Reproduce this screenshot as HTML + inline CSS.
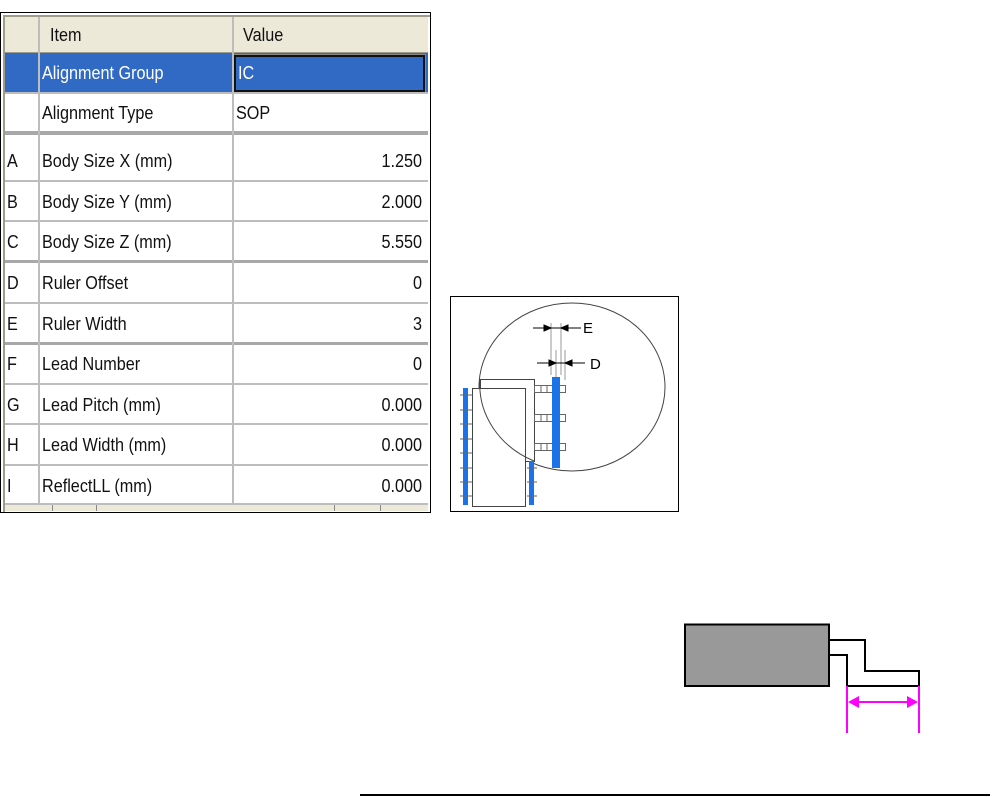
<!DOCTYPE html><html><head><style>
body{margin:0;width:992px;height:797px;background:#fff;position:relative;overflow:hidden;font-family:"Liberation Sans",sans-serif;}
.a{position:absolute}
.t{font-size:18px;color:#111;transform:scaleX(0.9);transform-origin:left center;white-space:nowrap;position:absolute}
.r{transform-origin:right center;text-align:right}
.h{position:absolute;left:5px;width:423px;height:2px;background:#bdbdbd}
</style></head><body>
<div class="a" style="left:0;top:12px;width:429px;height:499px;border:1px solid #000;background:#fff"></div>
<div class="a" style="left:3px;top:15px;width:425px;height:495px;border-left:2px solid #a09c8c;border-top:2px solid #a09c8c"></div>
<div class="a" style="left:5px;top:17px;width:423px;height:35px;background:#ece9d8;border-bottom:1px solid #a09c8c"></div>
<div class="a" style="left:5px;top:53px;width:423px;height:39px;background:#316ac5"></div>
<div class="a" style="left:234px;top:55px;width:187px;height:33px;border:2px solid #111;outline:1px solid #888"></div>
<div class="a" style="left:5px;top:131px;width:423px;height:4px;background:#a8a8a8"></div>
<div class="a" style="left:5px;top:260px;width:423px;height:3px;background:#a8a8a8"></div>
<div class="h" style="top:92px"></div>
<div class="h" style="top:180px"></div><div class="h" style="top:220px"></div>
<div class="h" style="top:302px"></div><div class="a" style="left:5px;top:342px;width:423px;height:3px;background:#a8a8a8"></div>
<div class="h" style="top:383px"></div><div class="h" style="top:423px"></div><div class="h" style="top:464px"></div><div class="h" style="top:503px"></div>
<div class="a" style="left:38px;top:17px;width:2px;height:486px;background:#bdbdbd"></div>
<div class="a" style="left:232px;top:17px;width:2px;height:486px;background:#bdbdbd"></div>
<div class="a" style="left:5px;top:505px;width:423px;height:6px;background:#ece9d8"></div>
<div class="a" style="left:52px;top:505px;width:1px;height:6px;background:#888"></div>
<div class="a" style="left:96px;top:505px;width:1px;height:6px;background:#888"></div>
<div class="a" style="left:334px;top:505px;width:1px;height:6px;background:#888"></div>
<div class="a" style="left:380px;top:505px;width:1px;height:6px;background:#888"></div>
<div class="t" style="left:50px;top:25px">Item</div>
<div class="t" style="left:243px;top:25px">Value</div>
<div class="t" style="left:42px;top:63px;color:#fff">Alignment Group</div>
<div class="t" style="left:238px;top:63px;color:#fff">IC</div>
<div class="t" style="left:42px;top:103px">Alignment Type</div>
<div class="t" style="left:236px;top:103px">SOP</div>
<div class="t" style="left:7px;top:151px">A</div><div class="t" style="left:42px;top:151px">Body Size X (mm)</div><div class="t r" style="right:570px;top:151px">1.250</div>
<div class="t" style="left:7px;top:192px">B</div><div class="t" style="left:42px;top:192px">Body Size Y (mm)</div><div class="t r" style="right:570px;top:192px">2.000</div>
<div class="t" style="left:7px;top:232px">C</div><div class="t" style="left:42px;top:232px">Body Size Z (mm)</div><div class="t r" style="right:570px;top:232px">5.550</div>
<div class="t" style="left:7px;top:273px">D</div><div class="t" style="left:42px;top:273px">Ruler Offset</div><div class="t r" style="right:570px;top:273px">0</div>
<div class="t" style="left:7px;top:314px">E</div><div class="t" style="left:42px;top:314px">Ruler Width</div><div class="t r" style="right:570px;top:314px">3</div>
<div class="t" style="left:7px;top:354px">F</div><div class="t" style="left:42px;top:354px">Lead Number</div><div class="t r" style="right:570px;top:354px">0</div>
<div class="t" style="left:7px;top:395px">G</div><div class="t" style="left:42px;top:395px">Lead Pitch (mm)</div><div class="t r" style="right:570px;top:395px">0.000</div>
<div class="t" style="left:7px;top:435px">H</div><div class="t" style="left:42px;top:435px">Lead Width (mm)</div><div class="t r" style="right:570px;top:435px">0.000</div>
<div class="t" style="left:7px;top:476px">I</div><div class="t" style="left:42px;top:476px">ReflectLL (mm)</div><div class="t r" style="right:570px;top:476px">0.000</div>

<svg class="a" style="left:0;top:0" width="992" height="797">
<rect x="450.5" y="296.5" width="228" height="215" fill="#fff" stroke="#000"/>
<ellipse cx="572" cy="387" rx="93" ry="84" fill="none" stroke="#444"/>
<rect x="480.5" y="379.5" width="54" height="82" fill="#fff" stroke="#444"/>
<rect x="472.5" y="388.5" width="53" height="118" fill="#fff" stroke="#444"/>
<path d="M480 379 A93 84 0 0 0 534 461" fill="none" stroke="#444"/>
<rect x="463" y="388" width="5" height="117" fill="#1a73e8"/>
<rect x="529" y="461" width="5" height="44" fill="#1a73e8"/>
<g fill="none" stroke="#666">
<rect x="534.5" y="385.5" width="31" height="7"/><rect x="534.5" y="414.5" width="31" height="7"/><rect x="534.5" y="443.5" width="31" height="7"/>
<path d="M541 385v7M547 385v7M541 414v7M547 414v7M541 443v7M547 443v7"/>
<path d="M460 395h12M460 410h12M460 424h12M460 439h12M460 453h12M460 468h12M460 482h12M460 496h12M527 468h10M527 482h10M527 496h10"/>
</g>
<g stroke="#999"><path d="M551 323v52M561 323v52M556 350v28M565 350v30"/></g>
<rect x="552" y="377" width="8" height="91" fill="#1a73e8"/>
<g stroke="#000" fill="#000"><path d="M533 328h48"/><path d="M551 328l-7-3v6z"/><path d="M561 328l7-3v6z"/>
<path d="M537 363h48"/><path d="M556 363l-7-3v6z"/><path d="M565 363l7-3v6z"/></g>
<text x="583" y="333" font-size="15" font-family="Liberation Sans">E</text>
<text x="590" y="369" font-size="15" font-family="Liberation Sans">D</text>
<rect x="685" y="624.5" width="144" height="61.5" fill="#999" stroke="#000" stroke-width="2"/>
<path d="M830 640h35v31h54v15" fill="none" stroke="#000" stroke-width="2"/>
<path d="M830 655h17v31h72" fill="none" stroke="#000" stroke-width="2"/>
<path d="M847 686v47M919 686v47M850 702h66" stroke="#f0f" stroke-width="2" fill="none"/>
<path d="M848 702l11-6v12zM918 702l-11-6v12z" fill="#f0f"/>
<rect x="360" y="794" width="630" height="2" fill="#000"/>
</svg>
</body></html>
